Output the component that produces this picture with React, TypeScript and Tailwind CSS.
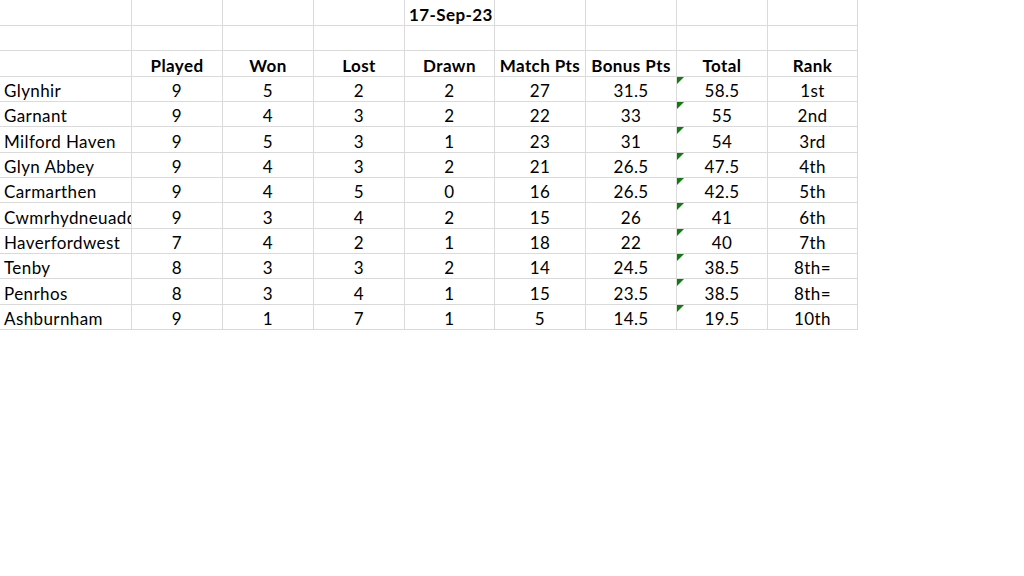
const ROWS: string[][] = [
  ['Glynhir', '9', '5', '2', '2', '27', '31.5', '58.5', '1st'],
  ['Garnant', '9', '4', '3', '2', '22', '33', '55', '2nd'],
  ['Milford Haven', '9', '5', '3', '1', '23', '31', '54', '3rd'],
  ['Glyn Abbey', '9', '4', '3', '2', '21', '26.5', '47.5', '4th'],
  ['Carmarthen', '9', '4', '5', '0', '16', '26.5', '42.5', '5th'],
  ['Cwmrhydneuadd', '9', '3', '4', '2', '15', '26', '41', '6th'],
  ['Haverfordwest', '7', '4', '2', '1', '18', '22', '40', '7th'],
  ['Tenby', '8', '3', '3', '2', '14', '24.5', '38.5', '8th='],
  ['Penrhos', '8', '3', '4', '1', '15', '23.5', '38.5', '8th='],
  ['Ashburnham', '9', '1', '7', '1', '5', '14.5', '19.5', '10th'],
];

const HEAD = ['', 'Played', 'Won', 'Lost', 'Drawn', 'Match Pts', 'Bonus Pts', 'Total', 'Rank'];

const COLS = 'grid grid-cols-[132px_91px_91px_91px_90px_91px_91px_91px_90px]';

function Cell({ children, left, bold, flag }: { children?: React.ReactNode; left?: boolean; bold?: boolean; flag?: boolean }) {
  return (
    <div
      className={`relative flex items-end overflow-hidden whitespace-nowrap border-r border-b border-[#dadada] pb-[2px] ${
        left ? 'justify-start pl-[4px]' : 'justify-center'
      } ${bold ? 'font-bold' : ''}`}
    >
      {flag && (
        <span className="absolute left-0 top-0 w-0 h-0 border-t-[7px] border-r-[7px] border-t-[#107c10] border-r-transparent" />
      )}
      {children}
    </div>
  );
}

export default function App() {
  // row heights follow the sheet's uneven 25/26 rhythm
  const rowH = (i: number) => (i === 0 || i % 3 === 2 ? 'h-[26px]' : 'h-[25px]');

  return (
    <div className="w-[1024px] h-[576px] bg-white text-black text-[17px] leading-none tracking-[0.4px] font-['Lato','Liberation_Sans',sans-serif]">
      <div className="w-[858px]">
        <div className={`${COLS} ${rowH(0)}`}>
          <Cell />
          <Cell />
          <Cell />
          <Cell />
          <Cell left bold>
            17-Sep-23
          </Cell>
          <Cell />
          <Cell />
          <Cell />
          <Cell />
        </div>
        <div className={`${COLS} ${rowH(1)}`}>
          {HEAD.map((_, i) => (
            <Cell key={i} />
          ))}
        </div>
        <div className={`${COLS} ${rowH(2)}`}>
          {HEAD.map((h, i) => (
            <Cell key={i} bold>
              {h}
            </Cell>
          ))}
        </div>
        {ROWS.map((row, r) => (
          <div key={row[0]} className={`${COLS} ${rowH(r + 3)}`}>
            {row.map((v, c) => (
              <Cell key={c} left={c === 0} flag={c === 7}>
                {v}
              </Cell>
            ))}
          </div>
        ))}
      </div>
    </div>
  );
}
